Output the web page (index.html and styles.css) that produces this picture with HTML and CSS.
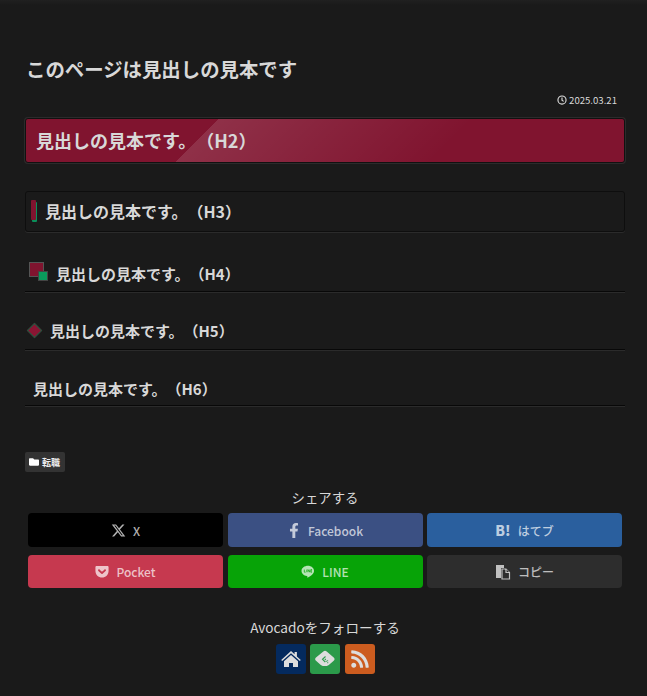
FILE: index.html
```html
<!DOCTYPE html>
<html lang="ja">
<head>
  <meta charset="utf-8">
  <title>このページは見出しの見本です</title>
  <link rel="stylesheet" href="styles.css">
</head>
<body>
  <main class="article">
    <h1 class="title">このページは見出しの見本です</h1>
    <div class="date">
      <svg class="date-icon" viewBox="0 0 16 16"><circle cx="8" cy="8" r="6.5"/><path d="M8 4v4.4l2.6 1.8"/></svg>
      <span>2025.03.21</span>
    </div>

    <h2 class="head-2">見出しの見本です。（H2）</h2>
    <h3 class="head-3">見出しの見本です。（H3）</h3>
    <h4 class="head-4">見出しの見本です。（H4）</h4>
    <h5 class="head-5">見出しの見本です。（H5）</h5>
    <h6 class="head-6">見出しの見本です。（H6）</h6>

    <a class="cat" href="#">
      <svg class="cat-icon" viewBox="0 0 512 512"><path d="M464 128H272l-64-64H48C21.49 64 0 85.49 0 112v288c0 26.51 21.49 48 48 48h416c26.51 0 48-21.49 48-48V176c0-26.51-21.49-48-48-48z"/></svg>
      <span>転職</span>
    </a>

    <section class="share">
      <div class="share-title">シェアする</div>
      <div class="share-grid">
        <a class="btn btn-x" href="#">
          <svg class="btn-icon icon-x" viewBox="0 0 512 512"><path d="M389.2 48h70.6L305.6 224.2 487 464H345L233.7 318.6 106.5 464H35.8L200.7 275.5 26.8 48H172.4L272.9 180.9 389.2 48zM364.4 421.8h39.1L151.1 88h-42L364.4 421.8z"/></svg>
          <span>X</span>
        </a>
        <a class="btn btn-fb" href="#">
          <svg class="btn-icon" viewBox="0 0 320 512"><path d="M279.14 288l14.22-92.66h-88.91v-60.13c0-25.35 12.42-50.06 52.24-50.06h40.42V6.26S260.43 0 225.36 0c-73.22 0-121.08 44.38-121.08 124.72v70.62H22.89V288h81.39v224h100.17V288z"/></svg>
          <span>Facebook</span>
        </a>
        <a class="btn btn-hatena" href="#">
          <b class="hatena-mark">B!</b>
          <span>はてブ</span>
        </a>
        <a class="btn btn-pocket" href="#">
          <svg class="btn-icon" viewBox="0 0 448 512"><path d="M407.6 64h-367C18.5 64 0 82.5 0 104.6v135.2C0 364.5 99.7 464 224.2 464c124 0 223.8-99.5 223.8-224.2V104.6c0-22.4-17.7-40.6-40.4-40.6zm-162 268.5c-12.4 11.8-31.4 11.1-42.4 0C89.5 223.6 88.3 227.4 88.3 209.3c0-16.9 13.8-30.7 30.7-30.7 17 0 16.1 3.8 105.2 89.3 90.6-87 88.6-89.3 105.5-89.3 16.9 0 30.7 13.8 30.7 30.7 0 17.8-2.9 15.7-114.8 123.2z"/></svg>
          <span>Pocket</span>
        </a>
        <a class="btn btn-line" href="#">
          <svg class="btn-icon" viewBox="0 0 16 16"><path d="M8 1.5C3.9 1.5.6 4.1.6 7.3c0 2.9 2.6 5.3 6.1 5.8.9.2.6 1 .5 1.5-.1.5.2.6.7.3.9-.5 4-2.4 5.5-4.1 1-1.1 1.5-2.2 1.5-3.5 0-3.2-3.3-5.8-6.9-5.8z"/><path class="line-cut" d="M3.8 5.8v3h1.5M6.6 5.8v3M8 8.8v-3l2 3v-3M12.6 5.8h-1.3v3h1.3M11.3 7.3h1.2"/></svg>
          <span>LINE</span>
        </a>
        <a class="btn btn-copy" href="#">
          <svg class="btn-icon icon-copy" viewBox="0 0 16 16"><path d="M1 1h8v3H6v10H1z"/><path class="copy-page" d="M7 5h4l3.5 3.5V15H7z"/><path class="copy-page" d="M11 5v3.5h3.5"/></svg>
          <span>コピー</span>
        </a>
      </div>
    </section>

    <section class="follow">
      <div class="follow-title">Avocadoをフォローする</div>
      <div class="follow-icons">
        <a class="sns sns-home" href="#">
          <svg class="sns-icon" viewBox="0 0 20 20"><path d="M10 2l3.6 3.3V3h2.3v4.4L19.8 11l-1 1.1L10 4.2 1.2 12.1l-1-1.1z"/><path d="M3 12.2L10 5.9l7 6.3V18h-5v-4H8v4H3z"/></svg>
        </a>
        <a class="sns sns-feedly" href="#">
          <svg class="sns-icon" viewBox="0 0 20 20"><path d="M8.3 2.6a2.4 2.4 0 0 1 3.4 0l7 6a2.2 2.2 0 0 1 0 3.2l-4.9 4.3a3 3 0 0 1-2 .8H7.8a3 3 0 0 1-2-.8L1 11.800a2.200 2.200 0 0 1 0-3.200z"/><path class="feedly-cut" d="M10.500 7.500L7.500 10.300l2.800 2.700M10.800 10l-1 .9M11 12.500l.6-.6M13 11.500l-.6.6M12.500 14l.6-.6"/></svg>
        </a>
        <a class="sns sns-rss" href="#">
          <svg class="sns-icon" viewBox="0 0 448 512"><path d="M128.081 415.959c0 35.369-28.672 64.041-64.041 64.041S0 451.328 0 415.959s28.672-64.041 64.041-64.041 64.04 28.673 64.04 64.041zm175.66 47.25c-8.354-154.6-132.185-278.587-286.95-286.95C7.656 175.765 0 183.105 0 192.253v48.069c0 8.415 6.49 15.472 14.887 16.018 111.832 7.284 201.473 96.702 208.772 208.772.547 8.397 7.604 14.887 16.018 14.887h48.069c9.149.001 16.489-7.655 15.995-16.79zm144.249.288C439.596 229.677 251.465 40.445 16.503 32.01 7.473 31.686 0 38.981 0 48.016v48.068c0 8.625 6.835 15.645 15.453 15.999 191.179 7.839 344.627 161.316 352.465 352.465.353 8.618 7.373 15.453 15.999 15.453h48.068c9.034-.001 16.329-7.474 16.005-16.504z"/></svg>
        </a>
      </div>
    </section>
  </main>
</body>
</html>
```

FILE: styles.css
```css
* { box-sizing: border-box; }
body {
  margin: 0;
  background: linear-gradient(#202020, #1a1a1a 5px) no-repeat;
  background-color: #1a1a1a;
  color: #d8d8d8;
  font-family: "Noto Sans CJK JP", "Noto Sans", sans-serif;
  text-spacing-trim: space-all;
  overflow: hidden;
}
a { color: inherit; text-decoration: none; }

.article { width: 600px; margin-left: 25px; padding-top: 55px; }

.title { margin: 0 0 0 1px; font-size: 19.4px; line-height: 28px; font-weight: 700; }

.date {
  display: flex;
  justify-content: flex-end;
  align-items: center;
  gap: 2px;
  height: 14px;
  margin-top: 10px;
  padding-right: 8px;
  font-size: 9.6px;
}
.date-icon { width: 10px; height: 10px; fill: none; stroke: #ddd; stroke-width: 1.8; }

.head-2, .head-3, .head-4, .head-5, .head-6 { margin: 0; font-weight: 700; position: relative; }

.head-2 {
  height: 45px;
  margin-top: 11px;
  padding-left: 10px;
  font-size: 18px;
  line-height: 43px;
  border: 1px solid #111;
  border-radius: 3px;
  box-shadow: 0 0 0 1px #2b2b2b;
  background: linear-gradient(135deg, transparent 30%, rgba(255, 255, 255, 0.12) 30%, transparent 70%), #80142f;
}

.head-3 {
  height: 41px;
  margin-top: 28px;
  padding-left: 19px;
  font-size: 16px;
  line-height: 39px;
  border: 1px solid #0e0e0e;
  border-radius: 3px;
  box-shadow: 0 1px 0 #2b2b2b;
}
.head-3::before {
  content: "";
  position: absolute;
  left: 5px;
  top: 8px;
  width: 5px;
  height: 20px;
  border-radius: 1px;
  background-color: #80142f;
  box-shadow: 1px 2px 0 #0a8f5a;
}

.head-4, .head-5, .head-6 {
  border-bottom: 1px solid #080808;
  box-shadow: 0 1px 0 #2b2b2b;
  font-size: 15px;
}

.head-4 { height: 38px; margin-top: 22px; padding: 6px 0 0 31px; line-height: 27px; }
.head-4::before {
  content: "";
  position: absolute;
  left: 4px;
  top: 8px;
  width: 13px;
  height: 13px;
  background-color: #80142f;
  border: 1px solid #555;
}
.head-4::after {
  content: "";
  position: absolute;
  left: 13px;
  top: 17px;
  width: 8px;
  height: 8px;
  background-color: #0a9a5c;
  border: 1px solid #444;
}

.head-5 { height: 38px; margin-top: 20px; padding: 5px 0 0 25px; line-height: 27px; }
.head-5::before {
  content: "";
  position: absolute;
  left: 4px;
  top: 13px;
  width: 9px;
  height: 9px;
  background-color: #8a1533;
  border: 1px solid #1d5a40;
  transform: rotate(45deg);
}

.head-6 { height: 38px; margin-top: 18px; padding: 7px 0 0 8px; line-height: 27px; }

.cat {
  display: inline-flex;
  align-items: center;
  gap: 3px;
  height: 20px;
  margin-top: 46px;
  padding: 0 5px 0 4px;
  background-color: #333;
  border-radius: 2px;
  color: #eee;
  font-size: 9px;
  font-weight: 700;
  vertical-align: top;
}
.cat-icon { width: 10px; height: 10px; fill: #fff; }

.share { margin-top: 15px; padding: 0 3px; text-align: center; }
.share-title { font-size: 13.4px; line-height: 21px; }
.share-grid {
  display: grid;
  grid-template-columns: repeat(3, 1fr);
  grid-template-rows: 34px 33px;
  gap: 8px 4.5px;
  margin-top: 5px;
}
.btn {
  display: flex;
  justify-content: center;
  align-items: center;
  gap: 7px;
  border-radius: 4px;
  color: rgba(255, 255, 255, 0.7);
  font-size: 12px;
  font-weight: 500;
}
.btn-x { background-color: #000; }
.btn-fb { background-color: #3b5083; }
.btn-hatena { background-color: #2a5f9e; }
.btn-pocket { background-color: #c6394f; }
.btn-line { background-color: #07a307; }
.btn-copy { background-color: #2d2d2d; }
.btn-icon { width: 14px; height: 15px; fill: currentColor; }
.icon-x { width: 15px; height: 15px; }
.icon-copy { width: 16px; height: 16px; }
.hatena-mark { font-size: 14px; font-weight: 900; }
.line-cut { fill: none; stroke: #07a307; stroke-width: 0.8; }
.copy-page { fill: #2d2d2d; stroke: currentColor; stroke-width: 1.2; }

.follow { margin-top: 29px; text-align: center; }
.follow-title { font-size: 13.6px; line-height: 21px; }
.follow-icons {
  display: flex;
  justify-content: center;
  gap: 4.5px;
  margin-top: 6px;
}
.sns {
  display: flex;
  justify-content: center;
  align-items: center;
  width: 30px;
  height: 30px;
  border-radius: 3px;
}
.sns-home { background-color: #042a5e; }
.sns-feedly { background-color: #2b9a4a; }
.sns-rss { background-color: #cc5c1f; }
.sns-icon { width: 20px; height: 20px; fill: #ddd; }
.feedly-cut { fill: none; stroke: #2b9a4a; stroke-width: 1.1; }
```
